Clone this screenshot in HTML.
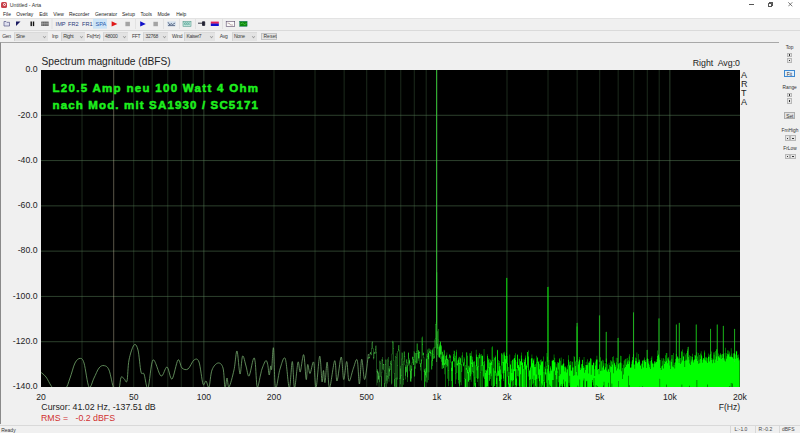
<!DOCTYPE html>
<html><head><meta charset="utf-8">
<style>
*{margin:0;padding:0;box-sizing:border-box}
html,body{width:800px;height:433px;overflow:hidden;background:#f0f0f0;font-family:"Liberation Sans",sans-serif;color:#000}
.a{position:absolute;white-space:pre;line-height:1}
#title{position:absolute;left:0;top:0;width:800px;height:9px;background:#fff}
#menu{position:absolute;left:0;top:9px;width:800px;height:9px;background:#fff}
.mi{position:absolute;top:13px;font-size:4.95px;color:#222}
#tb1{position:absolute;left:0;top:17.6px;width:800px;height:13px;background:#f0f0f0;border-top:1px solid #e3e3e3}
#tb2{position:absolute;left:0;top:29.7px;width:800px;height:12.5px;background:#f0f0f0;border-top:1px solid #dadada}
.lbl{position:absolute;font-size:5px;color:#3a3a3a;top:33.4px;letter-spacing:-0.3px}
.cb{position:absolute;top:31.7px;height:9px;background:#e3e3e3;border-left:0.5px solid #d4d4d4;border-top:0.5px solid #dadada}
.cb span{position:absolute;left:1.5px;top:0.6px;font-size:5px;color:#3a3a3a;letter-spacing:-0.3px}
.cb i{position:absolute;right:2.2px;top:2.6px;width:3px;height:3px;border-right:0.5px solid #999;border-bottom:0.5px solid #999;transform:rotate(45deg) scale(.8)}
.sep{position:absolute;top:19px;width:1px;height:10px;background:#d8d8d8}
.ylab{position:absolute;font-size:8.7px;color:#222;text-align:right;width:30px;left:7.5px}
.xlab{position:absolute;font-size:8.6px;color:#222;top:393.1px;width:40px;text-align:center}
</style></head><body>
<div id="title">
  <div class="a" style="left:1.2px;top:1.8px;width:6px;height:6px;border-radius:1.5px;background:#c8414b"></div>
  <div class="a" style="left:2.6px;top:3.1px;width:3.2px;height:3.2px;border-radius:50%;border:0.9px solid #fff"></div>
  <div class="a" style="left:9.8px;top:2.8px;font-size:5.2px;color:#333">Untitled - Arta</div>
  <div class="a" style="left:749px;top:4.2px;width:5.2px;height:0.65px;background:#555"></div>
  <div class="a" style="left:768.3px;top:3px;width:3.5px;height:3.5px;border:0.65px solid #555;border-radius:0.5px"></div>
  <div class="a" style="left:769.4px;top:2.1px;width:3.5px;height:3.5px;border-top:0.65px solid #555;border-right:0.65px solid #555;border-radius:0 0.8px 0 0"></div>
  <svg class="a" style="left:787.5px;top:1.8px" width="5" height="5"><path d="M0.3 0.3L4.3 4.3M4.3 0.3L0.3 4.3" stroke="#444" stroke-width="0.7"/></svg>
</div>
<div id="menu"></div>
<div class="a mi" style="left:3px">File</div>
<div class="a mi" style="left:16.2px">Overlay</div>
<div class="a mi" style="left:39.2px">Edit</div>
<div class="a mi" style="left:53.2px">View</div>
<div class="a mi" style="left:69px">Recorder</div>
<div class="a mi" style="left:95px">Generator</div>
<div class="a mi" style="left:122px">Setup</div>
<div class="a mi" style="left:140.5px">Tools</div>
<div class="a mi" style="left:157.5px">Mode</div>
<div class="a mi" style="left:176.2px">Help</div>

<div id="tb1"></div>
<div id="tb2"></div>
<!-- toolbar 1 -->
<svg class="a" style="left:0;top:17px" width="260" height="13">
  <!-- open -->
  <path d="M4 4.5h2l0.8 0.8h2.7v3.7h-5.5z" fill="#dfe0f0" stroke="#5a5a88" stroke-width="0.7"/>
  <!-- triangle -->
  <path d="M16 4.5h4.5L16 9z" fill="#1a1a60"/>
  <!-- pause -->
  <rect x="30.5" y="4.5" width="1.4" height="4.6" fill="#111"/><rect x="32.8" y="4.5" width="1.4" height="4.6" fill="#111"/>
  <!-- tape -->
  <rect x="41.3" y="4.6" width="7.3" height="4.4" fill="#555"/>
  <path d="M42.8 4.6v4.4M44.9 4.6v4.4M47 4.6v4.4M41.3 6.8h7.3" stroke="#ddd" stroke-width="0.45"/>
  <rect x="51.7" y="2" width="0.6" height="10" fill="#d8d8d8"/>
  <rect x="93" y="1.7" width="14" height="10" fill="#cce4f7"/>
  <!-- red play -->
  <path d="M111.6 4.3L117.4 6.9L111.6 9.5z" fill="#e01818"/>
  <rect x="125.4" y="4.8" width="4.5" height="4.4" fill="#a4a4a4"/>
  <rect x="135.3" y="2" width="0.6" height="10" fill="#d8d8d8"/>
  <path d="M140.2 4.3L145.8 6.9L140.2 9.5z" fill="#1010c8"/>
  <rect x="153.4" y="4.8" width="4.5" height="4.4" fill="#a4a4a4"/>
  <rect x="163" y="2" width="0.6" height="10" fill="#d8d8d8"/>
  <rect x="167.3" y="4.3" width="8.5" height="5" fill="#d4e0ec"/>
  <path d="M168 5.2l1.8 2.8 1.2-1.5 1.5 1 2.6-1.5M168 8.6h7" stroke="#334466" stroke-width="0.7" fill="none"/>
  <rect x="179" y="2" width="0.6" height="10" fill="#d8d8d8"/>
  <rect x="183" y="4.3" width="8" height="5" fill="#c8e8e0" stroke="#3a8a7a" stroke-width="0.5"/>
  <path d="M183.8 5.2l2 3 2-3 2 3M183.8 8.2l2-3 2 3 2-3" stroke="#2a8a7a" stroke-width="0.45" fill="none"/>
  <rect x="195" y="2" width="0.6" height="10" fill="#d8d8d8"/>
  <path d="M198 6.2h4.2M202.5 4.8h2.2v3.6h-2.2z" stroke="#223" stroke-width="0.9" fill="#223"/>
  <rect x="210.8" y="4.6" width="8" height="2.2" fill="#e0205a"/><rect x="210.8" y="6.6" width="8" height="2.4" fill="#1010d0"/>
  <rect x="222.4" y="2" width="0.6" height="10" fill="#d8d8d8"/>
  <rect x="226.2" y="4.3" width="8.5" height="5" fill="#fafafa" stroke="#5a4a6a" stroke-width="0.6"/>
  <path d="M227.5 6l2 0.5 1 1.5 2.5 0" stroke="#633" stroke-width="0.4" fill="none"/>
  <rect x="239.7" y="4.3" width="7.4" height="5" fill="#0f8a0f" stroke="#066" stroke-width="0.4"/>
  <path d="M240.5 7l2-1 2 1.5 2-1" stroke="#8f8" stroke-width="0.4" fill="none"/>
</svg>
<div class="a" style="left:55.6px;top:21.7px;font-size:5.6px;color:#2a3a7a">IMP</div>
<div class="a" style="left:68px;top:21.7px;font-size:5.6px;color:#2a3a7a">FR2</div>
<div class="a" style="left:82px;top:21.7px;font-size:5.6px;color:#2a3a7a">FR1</div>
<div class="a" style="left:95.5px;top:21.7px;font-size:5.6px;color:#2a5aaa">SPA</div>

<!-- toolbar 2 -->
<div class="lbl" style="left:2.2px">Gen</div>
<div class="cb" style="left:13.5px;width:34.5px"><span>Sine</span><i></i></div>
<div class="lbl" style="left:52px">Inp</div>
<div class="cb" style="left:60.7px;width:24px"><span>Right</span><i></i></div>
<div class="lbl" style="left:86.8px">Fs(Hz)</div>
<div class="cb" style="left:102.5px;width:25.5px"><span>48000</span><i></i></div>
<div class="lbl" style="left:132px">FFT</div>
<div class="cb" style="left:143px;width:25px"><span>32768</span><i></i></div>
<div class="lbl" style="left:172px">Wind</div>
<div class="cb" style="left:184px;width:31.3px"><span>Kaiser7</span><i></i></div>
<div class="lbl" style="left:219.8px">Avg</div>
<div class="cb" style="left:231.5px;width:25.5px"><span>None</span><i></i></div>
<div class="a" style="left:260.8px;top:32.5px;width:16.2px;height:7.4px;background:#e4e4e4;border:0.5px solid #c4c4c4"></div>
<div class="a" style="left:263.5px;top:33.6px;font-size:5px;color:#3a3a3a">Reset</div>

<!-- main panel -->
<div class="a" style="left:0;top:42px;width:779px;height:382px;border-top:1px solid #a8a8a8;border-left:1.2px solid #8a8a8a"></div>
<!-- status bar -->
<div class="a" style="left:0;top:424.5px;width:800px;height:0.8px;background:#d9d9d9"></div>
<div class="a" style="left:1.2px;top:427.5px;font-size:5px;color:#333">Ready</div>
<div class="a" style="left:730px;top:425.5px;width:0.6px;height:7px;background:#d8d8d8"></div>
<div class="a" style="left:734.6px;top:427px;font-size:5px;color:#444">L:-1.0</div>
<div class="a" style="left:755px;top:425.5px;width:0.6px;height:7px;background:#d8d8d8"></div>
<div class="a" style="left:758.6px;top:427px;font-size:5px;color:#444">R:-0.2</div>
<div class="a" style="left:779px;top:425.5px;width:0.6px;height:7px;background:#d8d8d8"></div>
<div class="a" style="left:782px;top:427px;font-size:5px;color:#444">dBFS</div>

<!-- right panel -->
<div class="a" style="left:774.5px;width:30px;text-align:center;top:46.0px;font-size:4.8px;color:#333">Top</div>
<div class="a" style="left:787px;top:52.6px;width:5.2px;height:4.8px;background:#e4e4e4;border:0.5px solid #b8b8b8"></div>
<div class="a" style="left:788.6px;top:54.4px;width:1.6px;height:1.1px;background:#333;margin-left:0.2px;margin-top:0.1px"></div>
<div class="a" style="left:787px;top:58px;width:5.2px;height:5.4px;background:#e4e4e4;border:0.5px solid #b8b8b8"></div>
<div class="a" style="left:788.6px;top:60.1px;width:1.6px;height:1.1px;background:#333;margin-left:0.2px;margin-top:0.1px"></div>
<div class="a" style="left:784px;top:69.9px;width:11px;height:7.6px;background:#e5f1fb;border:0.8px solid #3c88d0"></div>
<div class="a" style="left:774.5px;width:30px;text-align:center;top:72.7px;font-size:4.8px;color:#333">Fit</div>
<div class="a" style="left:774.7px;width:30px;text-align:center;top:86.2px;font-size:4.8px;color:#333">Range</div>
<div class="a" style="left:787px;top:92.5px;width:5.2px;height:4.9px;background:#e4e4e4;border:0.5px solid #b8b8b8"></div>
<div class="a" style="left:788.6px;top:94.4px;width:1.6px;height:1.1px;background:#333;margin-left:0.2px;margin-top:0.1px"></div>
<div class="a" style="left:787px;top:98.2px;width:5.2px;height:5.6px;background:#e4e4e4;border:0.5px solid #b8b8b8"></div>
<div class="a" style="left:788.6px;top:100.4px;width:1.6px;height:1.1px;background:#333;margin-left:0.2px;margin-top:0.1px"></div>
<div class="a" style="left:784.2px;top:112.4px;width:11.3px;height:6.8px;background:#e1e1e1;border:0.6px solid #adadad"></div>
<div class="a" style="left:774.8px;width:30px;text-align:center;top:114.8px;font-size:4.8px;color:#333">Set</div>
<div class="a" style="left:775px;width:30px;text-align:center;top:128.6px;font-size:4.8px;color:#333">FmHigh</div>
<div class="a" style="left:784.9px;top:135.4px;width:5.1px;height:5.6px;background:#e4e4e4;border:0.5px solid #b8b8b8"></div>
<div class="a" style="left:790px;top:135.4px;width:5.8px;height:5.6px;background:#e4e4e4;border:0.5px solid #b8b8b8"></div>
<div class="a" style="left:786.4px;top:137.6px;width:1.6px;height:1.1px;background:#333;margin-left:0.2px;margin-top:0.1px"></div>
<div class="a" style="left:791.9px;top:137.6px;width:1.6px;height:1.1px;background:#333;margin-left:0.2px;margin-top:0.1px"></div>
<div class="a" style="left:775px;width:30px;text-align:center;top:147.2px;font-size:4.8px;color:#333">FrLow</div>
<div class="a" style="left:784.9px;top:153.5px;width:5.1px;height:5.3px;background:#e4e4e4;border:0.5px solid #b8b8b8"></div>
<div class="a" style="left:790px;top:153.5px;width:5.8px;height:5.3px;background:#e4e4e4;border:0.5px solid #b8b8b8"></div>
<div class="a" style="left:786.4px;top:155.6px;width:1.6px;height:1.1px;background:#333;margin-left:0.2px;margin-top:0.1px"></div>
<div class="a" style="left:791.9px;top:155.6px;width:1.6px;height:1.1px;background:#333;margin-left:0.2px;margin-top:0.1px"></div>

<!-- plot labels -->
<div class="a" style="left:41.5px;top:57.4px;font-size:10.2px;color:#222">Spectrum magnitude (dBFS)</div>
<div class="a" style="left:692.7px;top:59px;font-size:8.8px;color:#222">Right  Avg:0</div>

<svg class="a" id="plot" style="left:41px;top:70px" width="699" height="317" viewBox="0 0 699 317">
  <rect width="699" height="317" fill="#000"/>
  <path d="M41.03 0V317M92.72 0V317M111.17 0V317M126.77 0V317M140.28 0V317M152.20 0V317M233.00 0V317M274.03 0V317M303.14 0V317M325.72 0V317M344.17 0V317M359.77 0V317M373.28 0V317M385.20 0V317M466.00 0V317M507.03 0V317M536.14 0V317M558.72 0V317M577.17 0V317M592.77 0V317M606.28 0V317M618.20 0V317" stroke="#3f5e3f" stroke-width="0.45" fill="none"/><path d="M162.86 0V317M395.86 0V317M628.86 0V317M0 45.29H699M0 90.57H699M0 135.86H699M0 181.14H699M0 226.43H699M0 271.71H699" stroke="#5a805a" stroke-width="0.5" fill="none"/><path d="M72.69 0V317" stroke="#c8c0a0" stroke-width="0.45"/>
  <path d="M0.00 302.40C0.83 303.17 2.83 304.23 5.00 307.00C7.17 309.77 9.83 317.00 13.00 319.00C16.17 321.00 21.33 320.83 24.00 319.00C26.67 317.17 27.33 312.33 29.00 308.00C30.67 303.67 32.33 296.27 34.00 293.00C35.67 289.73 37.50 288.40 39.00 288.40C40.50 288.40 41.50 288.23 43.00 293.00C44.50 297.77 46.33 314.50 48.00 317.00C49.67 319.50 51.33 311.17 53.00 308.00C54.67 304.83 56.33 300.07 58.00 298.00C59.67 295.93 61.33 295.27 63.00 295.60C64.67 295.93 66.33 296.10 68.00 300.00C69.67 303.90 71.33 316.00 73.00 319.00C74.67 322.00 76.83 319.93 78.00 318.00C79.17 316.07 79.17 308.97 80.00 307.40C80.83 305.83 82.00 308.00 83.00 308.60C84.00 309.20 85.17 314.10 86.00 311.00C86.83 307.90 86.83 296.00 88.00 290.00C89.17 284.00 91.50 276.67 93.00 275.00C94.50 273.33 95.83 275.50 97.00 280.00C98.17 284.50 99.00 298.00 100.00 302.00C101.00 306.00 101.83 301.33 103.00 304.00C104.17 306.67 105.50 320.33 107.00 318.00C108.50 315.67 109.83 292.00 112.00 290.00C114.17 288.00 117.67 304.83 120.00 306.00C122.33 307.17 124.17 296.50 126.00 297.00C127.83 297.50 129.17 310.17 131.00 309.00C132.83 307.83 135.33 291.83 137.00 290.00C138.67 288.17 139.33 296.50 141.00 298.00C142.67 299.50 145.00 300.33 147.00 299.00C149.00 297.67 151.17 291.17 153.00 290.00C154.83 288.83 156.50 288.00 158.00 292.00C159.50 296.00 160.83 310.83 162.00 314.00C163.17 317.17 164.00 310.50 165.00 311.00C166.00 311.50 167.00 318.83 168.00 317.00C169.00 315.17 169.50 304.00 171.00 300.00C172.50 296.00 175.17 293.33 177.00 293.00C178.83 292.67 180.83 293.83 182.00 298.00C183.17 302.17 183.33 316.33 184.00 318.00C184.67 319.67 185.33 308.17 186.00 308.00C186.67 307.83 186.83 318.33 188.00 317.00C189.17 315.67 191.67 306.00 193.00 300.00C194.33 294.00 195.00 280.33 196.00 281.00C197.00 281.67 198.07 303.17 199.00 304.00C199.93 304.83 200.60 287.33 201.60 286.00C202.60 284.67 203.93 292.67 205.00 296.00C206.07 299.33 206.78 307.13 208.00 306.00C209.22 304.87 211.27 291.50 212.30 289.20C213.33 286.90 213.55 287.57 214.20 292.20C214.85 296.83 215.32 314.87 216.20 317.00C217.08 319.13 218.70 308.00 219.50 305.00C220.30 302.00 220.13 301.38 221.00 299.00C221.87 296.62 223.75 291.45 224.70 290.70C225.65 289.95 226.12 292.12 226.70 294.50C227.28 296.88 227.70 304.75 228.20 305.00C228.70 305.25 229.28 297.00 229.70 296.00C230.12 295.00 230.23 302.00 230.70 299.00C231.17 296.00 231.87 274.83 232.50 278.00C233.13 281.17 233.42 314.50 234.50 318.00C235.58 321.50 237.38 303.92 239.00 299.00C240.62 294.08 242.65 285.33 244.20 288.50C245.75 291.67 247.12 317.50 248.30 318.00C249.48 318.50 250.43 291.50 251.30 291.50C252.17 291.50 252.55 317.88 253.50 318.00C254.45 318.12 256.05 294.87 257.00 292.20C257.95 289.53 258.25 303.25 259.20 302.00C260.15 300.75 261.70 283.45 262.70 284.70C263.70 285.95 264.53 307.87 265.20 309.50C265.87 311.13 266.07 295.50 266.70 294.50C267.33 293.50 268.00 303.88 269.00 303.50C270.00 303.12 271.70 289.78 272.70 292.20C273.70 294.62 274.00 319.00 275.00 318.00C276.00 317.00 277.70 287.25 278.70 286.20C279.70 285.15 280.37 309.32 281.00 311.70C281.63 314.08 282.00 300.37 282.50 300.50C283.00 300.63 283.38 313.88 284.00 312.50C284.62 311.12 285.45 291.28 286.20 292.20C286.95 293.12 287.25 318.25 288.50 318.00C289.75 317.75 292.45 291.87 293.70 290.70C294.95 289.53 294.92 311.62 296.00 311.00C297.08 310.38 299.08 287.25 300.20 287.00C301.32 286.75 301.78 308.75 302.70 309.50C303.62 310.25 304.82 291.25 305.70 291.50C306.58 291.75 306.88 309.88 308.00 311.00C309.12 312.12 311.03 301.70 312.40 298.20C313.77 294.70 315.20 287.37 316.20 290.00C317.20 292.63 317.65 314.13 318.40 314.00C319.15 313.87 319.82 289.95 320.70 289.20C321.58 288.45 322.58 310.37 323.70 309.50C324.82 308.63 326.78 288.25 327.40 284.00" stroke="#74a86c" stroke-width="0.8" fill="none"/><defs><linearGradient id="tg" gradientUnits="userSpaceOnUse" x1="327.4" y1="0" x2="479" y2="0"><stop offset="0" stop-color="#48b048"/><stop offset="0.55" stop-color="#10e810"/><stop offset="1" stop-color="#00ff00"/></linearGradient></defs><path d="M327.40 287.1V287.1H327.82V287.0H328.23V287.0H328.65V283.6H329.07V282.0H329.48V282.2H329.90V283.7H330.32V278.3H330.73V272.4H331.15V271.3H331.57V272.4H331.98V278.2H332.40V287.0H332.82V282.7H333.23V281.7H333.65V282.2H334.07V278.9H334.48V275.7H334.90V275.5H335.32V281.9H335.73V301.2H336.15V300.6H336.57V299.0H336.98V302.7H337.40V301.4H337.82V305.7H338.23V291.7H338.65V290.6H339.07V291.2H339.48V293.6H339.90V306.3H340.32V302.4H340.73V289.1H341.15V287.1H341.57V290.3H341.98V294.0H342.40V293.9H342.82V294.3H343.23V300.3H343.65V312.9H344.07V294.5H344.48V289.4H344.90V289.8H345.32V303.4H345.73V305.2H346.15V306.6H346.57V288.7H346.98V287.0H347.40V290.8H347.82V298.3H348.23V296.0H348.65V299.5H349.07V293.0H349.48V290.9H349.90V290.3H350.32V294.6H350.73V283.8H351.15V272.4H351.57V270.7H351.98V271.6H352.40V277.9H352.82V290.2H353.23V303.1H353.65V309.1H354.07V308.3H354.48V285.9H354.90V283.2H355.32V287.1H355.73V307.4H356.15V295.6H356.57V280.9H356.98V279.3H357.40V275.3H357.82V274.9H358.23V280.6H358.65V308.4H359.07V298.6H359.48V295.8H359.90V305.5H360.32V288.8H360.73V282.6H361.15V282.7H361.57V294.2H361.98V308.8H362.40V291.2H362.82V281.5H363.23V281.6H363.65V286.1H364.07V294.7H364.48V296.7H364.90V296.7H365.32V289.6H365.73V289.2H366.15V292.6H366.57V295.3H366.98V283.0H367.40V282.3H367.82V287.9H368.23V289.6H368.65V290.5H369.07V300.8H369.48V295.1H369.90V295.7H370.32V298.8H370.73V292.5H371.15V286.9H371.57V286.6H371.98V289.1H372.40V286.9H372.82V281.0H373.23V282.2H373.65V296.5H374.07V291.6H374.48V283.1H374.90V283.1H375.32V281.1H375.73V273.6H376.15V273.6H376.57V283.4H376.98V280.4H377.40V280.1H377.82V282.6H378.23V281.4H378.65V281.8H379.07V293.4H379.48V293.2H379.90V289.1H380.32V290.0H380.73V267.5H381.15V266.6H381.57V274.5H381.98V282.6H382.40V283.1H382.82V287.3H383.23V299.1H383.65V300.4H384.07V298.2H384.48V301.7H384.90V288.5H385.32V289.1H385.73V283.9H386.15V279.6H386.57V286.1H386.98V278.5H387.40V283.1H387.82V282.5H388.23V278.4H388.65V281.0H389.07V281.9H389.48V279.4H389.90V280.2H390.32V283.2H390.73V290.4H391.15V278.8H391.57V280.2H391.98V277.6H392.40V284.1H392.82V285.8H393.23V277.5H393.65V269.4H394.07V268.3H394.48V253.9H394.90V251.7H395.32V0.0H395.73V202.2H396.15V274.3H396.57V261.3H396.98V259.0H397.40V269.8H397.82V277.1H398.23V275.4H398.65V273.6H399.07V271.7H399.48V271.4H399.90V275.0H400.32V276.2H400.73V286.4H401.15V281.7H401.57V281.7H401.98V284.2H402.40V285.6H402.82V279.7H403.23V280.6H403.65V293.3H404.07V286.1H404.48V289.5H404.90V285.4H405.32V284.8H405.73V282.6H406.15V289.2H406.57V288.8H406.98V290.0H407.40V300.5H407.82V286.9H408.23V284.5H408.65V284.4H409.07V285.3H409.48V286.4H409.90V292.1H410.32V297.8H410.73V291.3H411.15V291.3H411.57V291.0H411.98V283.9H412.40V286.7H412.82V280.6H413.23V280.9H413.65V288.0H414.07V285.7H414.48V303.5H414.90V281.7H415.32V279.7H415.73V294.0H416.15V293.2H416.57V290.4H416.98V289.7H417.40V288.2H417.82V286.7H418.23V292.8H418.65V286.9H419.07V288.4H419.48V287.7H419.90V301.5H420.32V294.0H420.73V285.5H421.15V282.2H421.57V285.8H421.98V292.1H422.40V293.4H422.82V286.9H423.23V288.6H423.65V308.6H424.07V309.1H424.48V295.0H424.90V297.9H425.32V282.3H425.73V282.6H426.15V285.7H426.57V299.7H426.98V302.0H427.40V295.7H427.82V295.8H428.23V297.6H428.65V283.3H429.07V283.0H429.48V286.0H429.90V285.8H430.32V281.3H430.73V292.6H431.15V289.8H431.57V286.8H431.98V301.5H432.40V291.7H432.82V291.6H433.23V291.2H433.65V306.6H434.07V313.1H434.48V295.4H434.90V279.7H435.32V284.4H435.73V286.7H436.15V287.1H436.57V296.5H436.98V296.0H437.40V285.1H437.82V287.4H438.23V283.0H438.65V284.4H439.07V284.6H439.48V302.3H439.90V294.9H440.32V284.1H440.73V286.0H441.15V285.4H441.57V285.8H441.98V295.2H442.40V292.2H442.82V279.0H443.23V290.9H443.65V293.5H444.07V300.1H444.48V303.1H444.90V299.4H445.32V300.9H445.73V299.8H446.15V286.0H446.57V284.2H446.98V289.7H447.40V288.3H447.82V297.3H448.23V292.4H448.65V288.9H449.07V292.9H449.48V289.8H449.90V290.6H450.32V291.8H450.73V277.3H451.15V276.3H451.57V289.9H451.98V298.3H452.40V289.8H452.82V286.8H453.23V288.0H453.65V300.7H454.07V287.1H454.48V285.5H454.90V301.6H455.32V303.2H455.73V307.9H456.15V279.7H456.57V280.2H456.98V300.7H457.40V290.0H457.82V293.0H458.23V291.1H458.65V296.3H459.07V295.8H459.48V299.6H459.90V304.6H460.32V283.6H460.73V282.9H461.15V284.4H461.57V292.0H461.98V292.1H462.40V282.4H462.82V283.5H463.23V281.7H463.65V285.3H464.07V289.2H464.48V285.9H464.90V285.8H465.32V282.8H465.73V207.8H466.15V293.0H466.57V286.0H466.98V306.1H467.40V296.9H467.82V302.1H468.23V313.5H468.65V284.6H469.07V294.0H469.48V295.0H469.90V291.1H470.32V298.8H470.73V303.1H471.15V289.6H471.57V290.1H471.98V299.3H472.40V289.2H472.82V288.2H473.23V288.1H473.65V285.3H474.07V290.1H474.48V283.3H474.90V299.1H475.32V308.5H475.73V291.8H476.15V284.6H476.57V284.7H476.98V295.1H477.40V295.2H477.82V288.5H478.23V288.9H478.65V297.3H479.07V291.6H479.48V291.1H479.90V285.6H480.32V282.6H480.73V288.8H481.15V292.6H481.57V292.5H481.98V299.1H482.40V295.8H482.82V289.0H483.23V291.9H483.65V290.0H484.07V285.6H484.48V287.8H484.90V296.1H485.32V294.9H485.73V294.0H486.15V281.9H486.57V282.0H486.98V286.6H487.40V280.4H487.82V299.3H488.23V301.1H488.65V300.1H489.07V297.8H489.48V296.6H489.90V288.7H490.32V288.1H490.73V284.6H491.15V293.3H491.57V288.3H491.98V290.8H492.40V289.4H492.82V288.5H493.23V296.9H493.65V294.8H494.07V293.9H494.48V297.1H494.90V304.4H495.32V285.8H495.73V292.3H496.15V286.9H496.57V288.1H496.98V292.2H497.40V291.6H497.82V290.8H498.23V299.2H498.65V294.1H499.07V289.9H499.48V295.2H499.90V289.3H500.32V292.3H500.73V290.8H501.15V291.2H501.57V291.4H501.98V310.3H502.40V286.5H502.82V301.9H503.23V312.1H503.65V296.7H504.07V291.5H504.48V298.7H504.90V302.6H505.32V296.1H505.73V283.1H506.15V286.8H506.57V298.8H506.98V216.8H507.40V294.9H507.82V289.9H508.23V301.2H508.65V303.4H509.07V297.5H509.48V296.1H509.90V301.1H510.32V299.5H510.73V290.8H511.15V289.7H511.57V291.0H511.98V290.3H512.40V289.9H512.82V284.5H513.23V292.2H513.65V287.7H514.07V292.3H514.48V300.7H514.90V296.8H515.32V297.7H515.73V293.8H516.15V301.5H516.57V291.9H516.98V292.6H517.40V292.8H517.82V305.9H518.23V289.2H518.65V288.1H519.07V290.7H519.48V304.2H519.90V287.6H520.32V295.7H520.73V294.9H521.15V294.3H521.57V295.8H521.98V289.1H522.40V293.4H522.82V293.5H523.23V296.7H523.65V301.5H524.07V296.3H524.48V297.4H524.90V297.5H525.32V302.5H525.73V299.6H526.15V299.2H526.57V295.5H526.98V285.2H527.40V289.7H527.82V296.1H528.23V291.7H528.65V294.8H529.07V295.1H529.48V291.1H529.90V300.5H530.32V300.8H530.73V291.6H531.15V291.7H531.57V297.6H531.98V297.4H532.40V305.8H532.82V286.1H533.23V286.9H533.65V305.2H534.07V295.9H534.48V291.6H534.90V290.2H535.32V302.0H535.73V256.6H536.15V252.8H536.57V305.6H536.98V294.6H537.40V291.5H537.82V289.3H538.23V286.9H538.65V290.2H539.07V300.0H539.48V297.6H539.90V298.5H540.32V294.3H540.73V294.1H541.15V289.9H541.57V289.7H541.98V298.0H542.40V296.0H542.82V287.1H543.23V302.7H543.65V297.4H544.07V295.1H544.48V300.0H544.90V291.8H545.32V295.1H545.73V295.2H546.15V289.3H546.57V294.8H546.98V303.4H547.40V292.6H547.82V292.8H548.23V291.0H548.65V292.4H549.07V288.3H549.48V288.6H549.90V304.7H550.32V288.8H550.73V294.7H551.15V295.1H551.57V295.4H551.98V293.1H552.40V291.7H552.82V293.0H553.23V299.3H553.65V306.1H554.07V291.4H554.48V295.5H554.90V289.1H555.32V289.9H555.73V285.8H556.15V289.4H556.57V299.7H556.98V298.9H557.40V299.0H557.82V304.3H558.23V294.5H558.65V245.2H559.07V287.2H559.48V301.0H559.90V290.7H560.32V291.3H560.73V300.8H561.15V289.7H561.57V297.4H561.98V295.8H562.40V290.6H562.82V293.2H563.23V300.0H563.65V298.8H564.07V297.2H564.48V293.2H564.90V288.4H565.32V261.8H565.73V300.5H566.15V301.7H566.57V294.2H566.98V299.5H567.40V298.8H567.82V292.8H568.23V295.0H568.65V301.9H569.07V296.3H569.48V290.2H569.90V296.9H570.32V290.8H570.73V291.7H571.15V294.5H571.57V287.1H571.98V303.2H572.40V286.3H572.82V290.5H573.23V292.8H573.65V293.4H574.07V295.1H574.48V296.7H574.90V287.8H575.32V300.5H575.73V292.2H576.15V288.0H576.57V298.6H576.98V267.8H577.40V294.2H577.82V293.2H578.23V292.7H578.65V299.5H579.07V292.5H579.48V285.8H579.90V285.9H580.32V301.2H580.73V293.2H581.15V297.9H581.57V309.1H581.98V294.8H582.40V304.5H582.82V290.8H583.23V298.2H583.65V289.8H584.07V289.1H584.48V296.9H584.90V288.6H585.32V295.0H585.73V293.7H586.15V291.6H586.57V287.9H586.98V290.3H587.40V294.0H587.82V286.5H588.23V284.2H588.65V291.6H589.07V297.5H589.48V297.7H589.90V297.4H590.32V294.2H590.73V291.5H591.15V287.0H591.57V290.0H591.98V284.2H592.40V242.2H592.82V294.6H593.23V294.5H593.65V298.8H594.07V291.1H594.48V287.5H594.90V288.2H595.32V291.2H595.73V282.6H596.15V293.5H596.57V292.5H596.98V284.0H597.40V292.0H597.82V289.8H598.23V289.6H598.65V291.4H599.07V296.0H599.48V294.9H599.90V293.4H600.32V298.8H600.73V293.8H601.15V290.6H601.57V290.8H601.98V290.3H602.40V297.6H602.82V289.5H603.23V287.4H603.65V290.7H604.07V290.0H604.48V291.9H604.90V291.9H605.32V298.0H605.73V289.1H606.15V279.8H606.57V288.2H606.98V289.0H607.40V293.4H607.82V291.3H608.23V294.8H608.65V297.2H609.07V298.9H609.48V291.1H609.90V287.8H610.32V290.1H610.73V286.3H611.15V292.6H611.57V293.8H611.98V297.2H612.40V293.5H612.82V293.8H613.23V291.0H613.65V291.8H614.07V291.5H614.48V293.2H614.90V291.7H615.32V292.0H615.73V289.2H616.15V280.5H616.57V286.0H616.98V284.9H617.40V284.3H617.82V248.2H618.23V289.7H618.65V287.6H619.07V290.1H619.48V298.0H619.90V299.9H620.32V296.2H620.73V288.3H621.15V295.4H621.57V290.8H621.98V287.9H622.40V298.4H622.82V289.2H623.23V294.0H623.65V290.9H624.07V285.3H624.48V292.1H624.90V283.0H625.32V290.7H625.73V283.0H626.15V288.2H626.57V293.2H626.98V286.9H627.40V288.4H627.82V290.1H628.23V291.1H628.65V295.6H629.07V290.5H629.48V298.9H629.90V292.0H630.32V285.1H630.73V288.8H631.15V296.5H631.57V285.0H631.98V283.0H632.40V297.2H632.82V295.1H633.23V292.8H633.65V298.6H634.07V292.3H634.48V288.9H634.90V283.9H635.32V254.4H635.73V288.3H636.15V286.1H636.57V287.1H636.98V287.6H637.40V289.0H637.82V292.8H638.23V252.8H638.65V288.3H639.07V293.9H639.48V288.1H639.90V292.6H640.32V281.0H640.73V282.0H641.15V290.4H641.57V279.4H641.98V286.0H642.40V286.8H642.82V282.8H643.23V291.1H643.65V297.1H644.07V284.6H644.48V290.6H644.90V289.5H645.32V283.1H645.73V290.5H646.15V279.3H646.57V280.9H646.98V276.8H647.40V286.9H647.82V289.8H648.23V285.2H648.65V293.6H649.07V294.9H649.48V285.9H649.90V291.6H650.32V286.6H650.73V289.4H651.15V286.9H651.57V283.8H651.98V290.5H652.40V292.5H652.82V289.7H653.23V289.6H653.65V285.0H654.07V286.1H654.48V285.1H654.90V288.9H655.32V254.4H655.73V282.3H656.15V286.6H656.57V290.9H656.98V283.0H657.40V293.7H657.82V289.8H658.23V284.9H658.65V293.2H659.07V283.6H659.48V289.0H659.90V281.3H660.32V284.7H660.73V286.3H661.15V292.7H661.57V289.8H661.98V287.9H662.40V288.3H662.82V289.4H663.23V280.4H663.65V282.4H664.07V290.4H664.48V287.4H664.90V286.7H665.32V287.8H665.73V291.5H666.15V292.9H666.57V288.2H666.98V283.4H667.40V286.8H667.82V286.7H668.23V291.4H668.65V284.8H669.07V284.1H669.48V258.8H669.90V290.1H670.32V281.6H670.73V288.0H671.15V289.4H671.57V293.3H671.98V282.5H672.40V289.6H672.82V284.8H673.23V282.2H673.65V292.7H674.07V289.6H674.48V280.9H674.90V286.5H675.32V279.2H675.73V279.2H676.15V254.4H676.57V291.0H676.98V286.3H677.40V283.5H677.82V286.5H678.23V284.7H678.65V287.7H679.07V283.0H679.48V284.4H679.90V288.9H680.32V285.2H680.73V284.0H681.15V287.9H681.57V284.1H681.98V284.2H682.40V255.8H682.82V282.9H683.23V288.6H683.65V290.5H684.07V291.5H684.48V277.7H684.90V283.0H685.32V288.8H685.73V286.2H686.15V283.9H686.57V280.3H686.98V280.4H687.40V284.5H687.82V283.6H688.23V281.6H688.65V286.7H689.07V285.5H689.48V287.0H689.90V278.3H690.32V286.8H690.73V283.5H691.15V287.4H691.57V287.1H691.98V288.7H692.40V283.0H692.82V284.1H693.23V282.9H693.65V258.8H694.07V288.7H694.48V284.6H694.90V280.8H695.32V281.5H695.73V281.2H696.15V285.2H696.57V288.2H696.98V287.4H697.40V284.4H697.82V290.5H698.23V289.5H698.65V317.0H698.23V317.0H697.82V317.0H697.40V317.0H696.98V317.0H696.57V317.0H696.15V317.0H695.73V317.0H695.32V317.0H694.90V317.0H694.48V317.0H694.07V317.0H693.65V317.0H693.23V317.0H692.82V317.0H692.40V317.0H691.98V317.0H691.57V313.6H691.15V317.0H690.73V317.0H690.32V312.9H689.90V317.0H689.48V317.0H689.07V316.1H688.65V317.0H688.23V317.0H687.82V317.0H687.40V317.0H686.98V317.0H686.57V317.0H686.15V317.0H685.73V317.0H685.32V317.0H684.90V317.0H684.48V317.0H684.07V317.0H683.65V317.0H683.23V317.0H682.82V317.0H682.40V317.0H681.98V317.0H681.57V317.0H681.15V317.0H680.73V317.0H680.32V317.0H679.90V317.0H679.48V317.0H679.07V317.0H678.65V317.0H678.23V317.0H677.82V317.0H677.40V317.0H676.98V317.0H676.57V317.0H676.15V317.0H675.73V317.0H675.32V317.0H674.90V317.0H674.48V317.0H674.07V317.0H673.65V317.0H673.23V317.0H672.82V317.0H672.40V317.0H671.98V317.0H671.57V317.0H671.15V317.0H670.73V317.0H670.32V317.0H669.90V317.0H669.48V317.0H669.07V317.0H668.65V317.0H668.23V317.0H667.82V317.0H667.40V317.0H666.98V314.5H666.57V317.0H666.15V317.0H665.73V317.0H665.32V317.0H664.90V317.0H664.48V317.0H664.07V317.0H663.65V317.0H663.23V317.0H662.82V317.0H662.40V317.0H661.98V317.0H661.57V317.0H661.15V317.0H660.73V317.0H660.32V317.0H659.90V317.0H659.48V317.0H659.07V317.0H658.65V317.0H658.23V317.0H657.82V317.0H657.40V317.0H656.98V317.0H656.57V317.0H656.15V309.9H655.73V317.0H655.32V317.0H654.90V317.0H654.48V317.0H654.07V317.0H653.65V317.0H653.23V317.0H652.82V317.0H652.40V317.0H651.98V317.0H651.57V317.0H651.15V317.0H650.73V317.0H650.32V317.0H649.90V317.0H649.48V317.0H649.07V317.0H648.65V315.8H648.23V317.0H647.82V317.0H647.40V317.0H646.98V317.0H646.57V317.0H646.15V317.0H645.73V317.0H645.32V317.0H644.90V317.0H644.48V317.0H644.07V317.0H643.65V317.0H643.23V317.0H642.82V317.0H642.40V317.0H641.98V317.0H641.57V317.0H641.15V314.6H640.73V317.0H640.32V317.0H639.90V317.0H639.48V317.0H639.07V317.0H638.65V317.0H638.23V317.0H637.82V317.0H637.40V317.0H636.98V317.0H636.57V317.0H636.15V317.0H635.73V317.0H635.32V317.0H634.90V317.0H634.48V317.0H634.07V317.0H633.65V317.0H633.23V317.0H632.82V317.0H632.40V317.0H631.98V317.0H631.57V317.0H631.15V317.0H630.73V317.0H630.32V317.0H629.90V317.0H629.48V317.0H629.07V317.0H628.65V317.0H628.23V317.0H627.82V317.0H627.40V317.0H626.98V317.0H626.57V317.0H626.15V317.0H625.73V314.6H625.32V317.0H624.90V317.0H624.48V317.0H624.07V317.0H623.65V317.0H623.23V317.0H622.82V317.0H622.40V317.0H621.98V317.0H621.57V317.0H621.15V317.0H620.73V317.0H620.32V317.0H619.90V317.0H619.48V317.0H619.07V308.8H618.65V317.0H618.23V317.0H617.82V317.0H617.40V317.0H616.98V317.0H616.57V317.0H616.15V317.0H615.73V317.0H615.32V317.0H614.90V317.0H614.48V317.0H614.07V317.0H613.65V317.0H613.23V317.0H612.82V317.0H612.40V317.0H611.98V317.0H611.57V317.0H611.15V317.0H610.73V317.0H610.32V317.0H609.90V317.0H609.48V317.0H609.07V317.0H608.65V317.0H608.23V317.0H607.82V317.0H607.40V317.0H606.98V317.0H606.57V317.0H606.15V317.0H605.73V317.0H605.32V317.0H604.90V317.0H604.48V317.0H604.07V317.0H603.65V317.0H603.23V317.0H602.82V317.0H602.40V317.0H601.98V316.2H601.57V317.0H601.15V317.0H600.73V317.0H600.32V317.0H599.90V317.0H599.48V317.0H599.07V316.7H598.65V317.0H598.23V317.0H597.82V317.0H597.40V317.0H596.98V317.0H596.57V317.0H596.15V317.0H595.73V317.0H595.32V317.0H594.90V317.0H594.48V317.0H594.07V317.0H593.65V317.0H593.23V317.0H592.82V317.0H592.40V317.0H591.98V317.0H591.57V317.0H591.15V317.0H590.73V317.0H590.32V317.0H589.90V317.0H589.48V317.0H589.07V317.0H588.65V315.2H588.23V317.0H587.82V317.0H587.40V305.7H586.98V317.0H586.57V317.0H586.15V317.0H585.73V317.0H585.32V317.0H584.90V317.0H584.48V317.0H584.07V317.0H583.65V317.0H583.23V317.0H582.82V317.0H582.40V317.0H581.98V317.0H581.57V317.0H581.15V317.0H580.73V317.0H580.32V317.0H579.90V317.0H579.48V317.0H579.07V317.0H578.65V317.0H578.23V317.0H577.82V317.0H577.40V310.9H576.98V317.0H576.57V317.0H576.15V317.0H575.73V317.0H575.32V317.0H574.90V317.0H574.48V317.0H574.07V317.0H573.65V317.0H573.23V317.0H572.82V317.0H572.40V317.0H571.98V317.0H571.57V317.0H571.15V313.4H570.73V317.0H570.32V317.0H569.90V302.2H569.48V317.0H569.07V317.0H568.65V317.0H568.23V317.0H567.82V317.0H567.40V312.7H566.98V317.0H566.57V317.0H566.15V317.0H565.73V317.0H565.32V317.0H564.90V317.0H564.48V317.0H564.07V317.0H563.65V317.0H563.23V311.8H562.82V317.0H562.40V315.6H561.98V317.0H561.57V317.0H561.15V317.0H560.73V317.0H560.32V317.0H559.90V317.0H559.48V317.0H559.07V317.0H558.65V317.0H558.23V317.0H557.82V317.0H557.40V317.0H556.98V317.0H556.57V316.1H556.15V317.0H555.73V317.0H555.32V314.9H554.90V317.0H554.48V317.0H554.07V317.0H553.65V317.0H553.23V307.9H552.82V315.5H552.40V317.0H551.98V312.3H551.57V309.9H551.15V317.0H550.73V317.0H550.32V317.0H549.90V317.0H549.48V317.0H549.07V317.0H548.65V317.0H548.23V317.0H547.82V317.0H547.40V317.0H546.98V317.0H546.57V317.0H546.15V310.7H545.73V311.3H545.32V317.0H544.90V317.0H544.48V317.0H544.07V317.0H543.65V317.0H543.23V308.5H542.82V310.6H542.40V317.0H541.98V317.0H541.57V317.0H541.15V317.0H540.73V317.0H540.32V317.0H539.90V317.0H539.48V317.0H539.07V309.5H538.65V317.0H538.23V317.0H537.82V316.8H537.40V317.0H536.98V317.0H536.57V315.5H536.15V317.0H535.73V317.0H535.32V317.0H534.90V317.0H534.48V317.0H534.07V317.0H533.65V317.0H533.23V317.0H532.82V317.0H532.40V317.0H531.98V317.0H531.57V317.0H531.15V317.0H530.73V317.0H530.32V317.0H529.90V317.0H529.48V317.0H529.07V305.7H528.65V315.7H528.23V312.7H527.82V317.0H527.40V296.0H526.98V317.0H526.57V316.9H526.15V317.0H525.73V317.0H525.32V317.0H524.90V317.0H524.48V311.4H524.07V317.0H523.65V317.0H523.23V316.0H522.82V313.8H522.40V309.5H521.98V317.0H521.57V317.0H521.15V316.5H520.73V316.5H520.32V314.1H519.90V317.0H519.48V315.7H519.07V317.0H518.65V317.0H518.23V317.0H517.82V312.3H517.40V299.6H516.98V302.6H516.57V317.0H516.15V309.3H515.73V317.0H515.32V317.0H514.90V317.0H514.48V305.1H514.07V300.5H513.65V317.0H513.23V301.3H512.82V317.0H512.40V310.0H511.98V317.0H511.57V310.0H511.15V317.0H510.73V317.0H510.32V317.0H509.90V316.1H509.48V317.0H509.07V314.5H508.65V317.0H508.23V317.0H507.82V317.0H507.40V310.2H506.98V317.0H506.57V317.0H506.15V296.6H505.73V317.0H505.32V312.8H504.90V305.3H504.48V304.0H504.07V317.0H503.65V317.0H503.23V317.0H502.82V310.8H502.40V317.0H501.98V315.5H501.57V317.0H501.15V313.6H500.73V317.0H500.32V317.0H499.90V305.2H499.48V316.8H499.07V317.0H498.65V311.3H498.23V317.0H497.82V308.4H497.40V304.8H496.98V292.7H496.57V317.0H496.15V309.1H495.73V317.0H495.32V317.0H494.90V315.8H494.48V317.0H494.07V310.0H493.65V317.0H493.23V305.4H492.82V317.0H492.40V313.3H491.98V314.4H491.57V309.1H491.15V297.4H490.73V317.0H490.32V317.0H489.90V316.8H489.48V309.3H489.07V309.9H488.65V317.0H488.23V317.0H487.82V299.8H487.40V306.5H486.98V297.5H486.57V294.5H486.15V317.0H485.73V317.0H485.32V317.0H484.90V299.5H484.48V317.0H484.07V317.0H483.65V317.0H483.23V296.3H482.82V317.0H482.40V317.0H481.98V317.0H481.57V317.0H481.15V316.8H480.73V294.9H480.32V317.0H479.90V304.3H479.48V317.0H479.07V317.0H478.65V317.0H478.23V315.7H477.82V300.5H477.40V306.4H476.98V306.0H476.57V298.0H476.15V315.7H475.73V317.0H475.32V317.0H474.90V314.9H474.48V317.0H474.07V301.0H473.65V301.3H473.23V317.0H472.82V310.0H472.40V315.8H471.98V317.0H471.57V310.8H471.15V317.0H470.73V311.6H470.32V310.0H469.90V317.0H469.48V317.0H469.07V317.0H468.65V317.0H468.23V317.0H467.82V314.6H467.40V317.0H466.98V306.6H466.57V301.3H466.15V293.5H465.73V293.2H465.32V317.0H464.90V317.0H464.48V317.0H464.07V317.0H463.65V300.4H463.23V302.9H462.82V308.4H462.40V311.1H461.98V303.6H461.57V292.5H461.15V295.5H460.73V309.2H460.32V317.0H459.90V317.0H459.48V317.0H459.07V317.0H458.65V311.1H458.23V317.0H457.82V305.6H457.40V306.3H456.98V306.1H456.57V317.0H456.15V317.0H455.73V317.0H455.32V314.1H454.90V305.8H454.48V302.8H454.07V316.3H453.65V316.1H453.23V290.3H452.82V317.0H452.40V316.9H451.98V317.0H451.57V290.4H451.15V294.9H450.73V315.7H450.32V306.3H449.90V308.9H449.48V303.6H449.07V310.7H448.65V310.8H448.23V304.9H447.82V297.8H447.40V317.0H446.98V317.0H446.57V316.0H446.15V317.0H445.73V317.0H445.32V316.6H444.90V317.0H444.48V317.0H444.07V317.0H443.65V309.0H443.23V293.2H442.82V307.5H442.40V306.3H441.98V295.8H441.57V317.0H441.15V300.7H440.73V295.4H440.32V317.0H439.90V317.0H439.48V302.8H439.07V287.9H438.65V288.4H438.23V316.6H437.82V296.5H437.40V308.5H436.98V308.9H436.57V312.0H436.15V300.3H435.73V307.9H435.32V295.9H434.90V317.0H434.48V317.0H434.07V317.0H433.65V315.7H433.23V306.2H432.82V302.4H432.40V317.0H431.98V302.0H431.57V297.0H431.15V304.3H430.73V294.1H430.32V311.8H429.90V309.7H429.48V306.2H429.07V302.2H428.65V309.9H428.23V317.0H427.82V311.5H427.40V311.8H426.98V317.0H426.57V303.2H426.15V317.0H425.73V299.7H425.32V317.0H424.90V317.0H424.48V317.0H424.07V317.0H423.65V309.1H423.23V294.5H422.82V296.2H422.40V296.3H421.98V292.6H421.57V286.3H421.15V301.5H420.73V302.0H420.32V315.3H419.90V312.2H419.48V294.8H419.07V315.7H418.65V317.0H418.23V294.0H417.82V313.4H417.40V310.0H416.98V295.2H416.57V295.4H416.15V302.9H415.73V294.5H415.32V309.6H414.90V314.0H414.48V304.0H414.07V297.2H413.65V291.4H413.23V287.5H412.82V291.3H412.40V291.5H411.98V317.0H411.57V317.0H411.15V301.0H410.73V310.9H410.32V317.0H409.90V292.6H409.48V287.6H409.07V287.6H408.65V287.4H408.23V311.0H407.82V316.3H407.40V301.0H406.98V308.8H406.57V296.2H406.15V290.1H405.73V297.3H405.32V295.1H404.90V317.0H404.48V293.8H404.07V304.3H403.65V295.3H403.23V294.8H402.82V298.3H402.40V297.9H401.98V299.1H401.57V295.2H401.15V298.7H400.73V291.8H400.32V284.6H399.90V284.6H399.48V289.1H399.07V287.2H398.65V287.8H398.23V287.8H397.82V286.7H397.40V270.3H396.98V278.8H396.57V285.0H396.15V274.8H395.73V252.2H395.32V254.9H394.90V268.8H394.48V278.2H394.07V278.0H393.65V288.2H393.23V288.5H392.82V289.1H392.40V284.6H391.98V295.9H391.57V290.9H391.15V299.5H390.73V299.4H390.32V283.7H389.90V283.6H389.48V286.3H389.07V282.7H388.65V283.0H388.23V302.2H387.82V310.1H387.40V289.3H386.98V312.5H386.57V286.6H386.15V302.6H385.73V307.6H385.32V312.5H384.90V311.6H384.48V305.2H384.07V317.0H383.65V317.0H383.23V302.0H382.82V287.8H382.40V285.1H381.98V285.5H381.57V275.0H381.15V290.5H380.73V310.5H380.32V293.7H379.90V297.1H379.48V300.4H379.07V293.9H378.65V283.1H378.23V288.2H377.82V288.4H377.40V290.8H376.98V293.3H376.57V283.9H376.15V281.6H375.73V293.4H375.32V293.2H374.90V292.1H374.48V298.7H374.07V305.9H373.65V307.0H373.23V287.4H372.82V295.1H372.40V294.9H371.98V289.6H371.57V293.0H371.15V300.5H370.73V308.5H370.32V311.8H369.90V311.4H369.48V311.6H369.07V301.3H368.65V293.2H368.23V294.4H367.82V288.4H367.40V295.8H366.98V311.9H366.57V307.3H366.15V293.1H365.73V301.7H365.32V302.4H364.90V305.8H364.48V309.4H364.07V295.2H363.65V286.6H363.23V291.7H362.82V310.1H362.40V314.7H361.98V317.0H361.57V294.7H361.15V289.3H360.73V306.0H360.32V317.0H359.90V308.7H359.48V314.2H359.07V317.0H358.65V308.9H358.23V281.1H357.82V279.8H357.40V281.4H356.98V296.1H356.57V309.6H356.15V317.0H355.73V317.0H355.32V287.6H354.90V308.8H354.48V317.0H354.07V317.0H353.65V316.5H353.23V303.6H352.82V290.7H352.40V278.4H351.98V272.9H351.57V284.3H351.15V313.6H350.73V314.6H350.32V295.1H349.90V293.5H349.48V300.0H349.07V306.0H348.65V301.4H348.23V311.7H347.82V308.7H347.40V291.3H346.98V307.1H346.57V313.4H346.15V310.7H345.73V317.0H345.32V303.9H344.90V295.0H344.48V313.4H344.07V317.0H343.65V317.0H343.23V300.8H342.82V294.8H342.40V299.8H341.98V299.4H341.57V290.8H341.15V302.9H340.73V316.6H340.32V317.0H339.90V306.8H339.48V294.1H339.07V292.2H338.65V312.3H338.23V317.0H337.82V309.1H337.40V309.9H336.98V303.2H336.57V312.8H336.15V315.6H335.73V301.7H335.32V282.4H334.90V279.4H334.48V283.8H334.07V284.1H333.65V283.2H333.23V288.4H332.82V289.5H332.40V287.5H331.98V278.7H331.57V272.9H331.15V278.8H330.73V284.6H330.32V285.2H329.90V284.2H329.48V284.1H329.07V287.5H328.65V288.3H328.23V288.2H327.82V289.0H327.40Z" fill="url(#tg)"/><path d="M465.70 208.0V292M506.73 217.0V292" stroke="#10f010" stroke-width="0.7"/><path d="M395.60 0.0V292" stroke="#40d040" stroke-width="0.65"/><path d="M535.84 253.0V292M558.42 245.5V292M565.10 262.0V292M576.87 268.0V292M592.47 242.5V292M605.98 280.0V292M617.90 248.5V292M635.30 254.6V292M638.20 253.0V292M647.01 277.0V292M655.11 254.6V292M669.59 259.0V292M676.12 254.6V292M682.25 256.0V292M693.51 259.0V292" stroke="#30d830" stroke-width="0.55"/>
</svg>
<div class="a ylab" style="top:65.3px">0.0</div>
<div class="a ylab" style="top:110.6px">-20.0</div>
<div class="a ylab" style="top:155.9px">-40.0</div>
<div class="a ylab" style="top:201.2px">-60.0</div>
<div class="a ylab" style="top:246.4px">-80.0</div>
<div class="a ylab" style="top:291.7px">-100.0</div>
<div class="a ylab" style="top:337.0px">-120.0</div>
<div class="a ylab" style="top:382.3px">-140.0</div>
<div class="a xlab" style="left:21.0px">20</div>
<div class="a xlab" style="left:113.7px">50</div>
<div class="a xlab" style="left:183.9px">100</div>
<div class="a xlab" style="left:254.0px">200</div>
<div class="a xlab" style="left:346.7px">500</div>
<div class="a xlab" style="left:416.9px">1k</div>
<div class="a xlab" style="left:487.0px">2k</div>
<div class="a xlab" style="left:579.7px">5k</div>
<div class="a xlab" style="left:649.9px">10k</div>
<div class="a xlab" style="left:720.0px">20k</div>
<div class="a" style="left:52.5px;top:83.3px;font-size:11.5px;font-weight:bold;letter-spacing:1.3px;color:#1ef01e;-webkit-text-stroke:0.5px #1ef01e">L20.5 Amp neu 100 Watt 4 Ohm</div>
<div class="a" style="left:52.5px;top:99.9px;font-size:11.5px;font-weight:bold;letter-spacing:1.15px;color:#1ef01e;-webkit-text-stroke:0.5px #1ef01e">nach Mod. mit SA1930 / SC5171</div>
<div class="a" style="left:741px;top:71.2px;font-size:9px;line-height:9px;color:#222;white-space:pre">A
R
T
A</div>
<div class="a" style="left:718.7px;top:403.3px;font-size:8.6px;color:#222">F(Hz)</div>
<div class="a" style="left:41.3px;top:402.5px;font-size:8.8px;color:#222">Cursor: 41.02 Hz, -137.51 dB</div>
<div class="a" style="left:41px;top:414.1px;font-size:8.8px;color:#d03030">RMS =   -0.2 dBFS</div>
</body></html>
